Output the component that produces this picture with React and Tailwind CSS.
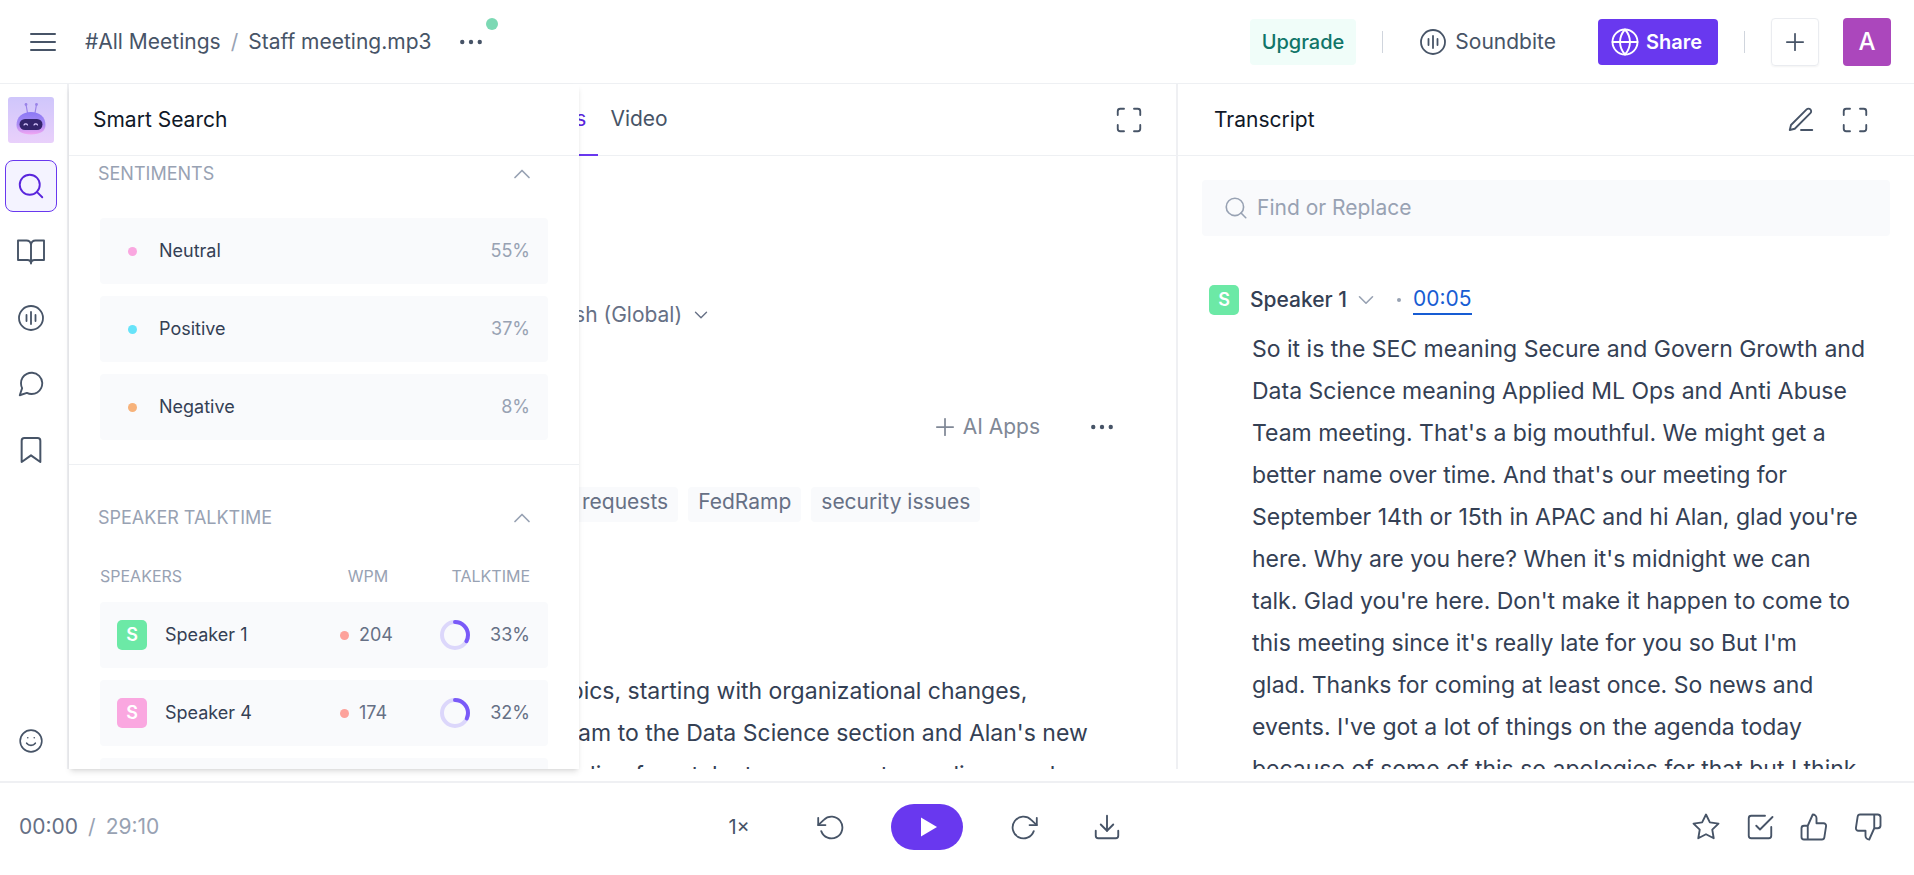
import React, { useState } from 'react';
import {
  FiBookOpen,
  FiBookmark,
  FiCheckSquare,
  FiChevronDown,
  FiChevronUp,
  FiDownload,
  FiEdit3,
  FiGlobe,
  FiMaximize,
  FiMenu,
  FiMessageCircle,
  FiMoreHorizontal,
  FiPlus,
  FiRotateCcw,
  FiRotateCw,
  FiSearch,
  FiSmile,
  FiStar,
  FiThumbsDown,
  FiThumbsUp,
} from 'react-icons/fi';

const sentiments = [
  { label: 'Neutral', value: '55%', dot: 'bg-[#faa7e0]' },
  { label: 'Positive', value: '37%', dot: 'bg-[#67e3f9]' },
  { label: 'Negative', value: '8%', dot: 'bg-[#f7b27a]' },
];

const speakers = [
  { name: 'Speaker 1', wpm: 204, talktime: 33, badge: 'bg-[#6ce9a6]' },
  { name: 'Speaker 4', wpm: 174, talktime: 32, badge: 'bg-[#faa7e0]' },
  { name: 'Speaker 2', wpm: 168, talktime: 18, badge: 'bg-[#67e3f9]' },
];

const tags = ['headcount planning', 'compliance requests', 'FedRamp', 'security issues'];

const summary = [
  'The meeting covered various topics, starting with organizational changes,',
  "including the move of the Ops team to the Data Science section and Alan's new",
  'role as a manager. Additional funding for a talent assessment was discussed',
];

const transcript = [
  'So it is the SEC meaning Secure and Govern Growth and',
  'Data Science meaning Applied ML Ops and Anti Abuse',
  "Team meeting. That's a big mouthful. We might get a",
  "better name over time. And that's our meeting for",
  "September 14th or 15th in APAC and hi Alan, glad you're",
  "here. Why are you here? When it's midnight we can",
  "talk. Glad you're here. Don't make it happen to come to",
  "this meeting since it's really late for you so But I'm",
  'glad. Thanks for coming at least once. So news and',
  "events. I've got a lot of things on the agenda today",
  'because of some of this so apologies for that but I think',
];

const SoundbiteIcon = () => (
  <svg width="28" height="28" viewBox="0 0 28 28" fill="none" stroke="currentColor" strokeWidth="1.8" strokeLinecap="round">
    <circle cx="14" cy="14" r="12" />
    <path d="M9.5 11v6M14 8v12M18.5 11v6" />
  </svg>
);

const RobotLogo = () => (
  <svg width="46" height="46" viewBox="0 0 46 46">
    <defs>
      <linearGradient id="tile" x1="0" y1="0" x2="0" y2="1">
        <stop offset="0" stopColor="#cfc6fb" />
        <stop offset="1" stopColor="#e9d0fb" />
      </linearGradient>
      <linearGradient id="head" x1="0" y1="0" x2="0" y2="1">
        <stop offset="0" stopColor="#8b78f5" />
        <stop offset="0.55" stopColor="#a98bf3" />
        <stop offset="1" stopColor="#f2a6f3" />
      </linearGradient>
    </defs>
    <rect width="46" height="46" rx="3" fill="url(#tile)" />
    <path d="M18 7.5 19.5 16M28.5 7.5 27 16" stroke="#9a83e8" strokeWidth="1.2" strokeLinecap="round" />
    <circle cx="18" cy="7.5" r="1.4" fill="#9a83e8" />
    <circle cx="28.5" cy="7.5" r="1.4" fill="#9a83e8" />
    <path d="M8.5 28c0-8 6-13 14.500-13s14.500 5 14.500 13c0 6-5 9.500-14.500 9.500S8.500 34 8.500 28z" fill="url(#head)" />
    <rect x="11.5" y="22" width="23" height="11" rx="5.5" fill="#33246b" />
    <path
      d="M16 28c.6-1.4 2.9-1.4 3.500 0M26 28c.6-1.4 2.9-1.4 3.500 0"
      fill="none"
      stroke="#d9c9ff"
      strokeWidth="1.2"
      strokeLinecap="round"
    />
  </svg>
);

const BookIcon = () => (
  <svg width="30" height="28" viewBox="0 0 30 28" fill="none" stroke="currentColor" strokeWidth="1.9" strokeLinecap="round" strokeLinejoin="round">
    <path d="M15 6.500C14.600 4 12.800 2.500 10.500 2.500H2V22h9.500c2.200 0 3.500 1 3.500 3.500 0-2.500 1.300-3.500 3.500-3.500H28V2.500h-8.500C17.200 2.500 15.400 4 15 6.500v19" />
  </svg>
);

const TalktimeRing = ({ percent }) => (
  <svg width="30" height="30" viewBox="0 0 30 30" fill="none" strokeWidth="4">
    <circle cx="15" cy="15" r="13" stroke="#dcd7fb" />
    <circle
      cx="15"
      cy="15"
      r="13"
      stroke="#7a5af8"
      strokeLinecap="round"
      pathLength="100"
      strokeDasharray={`${percent} 100`}
      transform="rotate(-90 15 15)"
    />
  </svg>
);

const Badge = ({ color }) => (
  <span className={`flex size-[30px] shrink-0 items-center justify-center rounded-[5px] text-lg font-semibold text-white ${color}`}>
    S
  </span>
);

const railItems = [
  { label: 'Notebook', icon: <BookIcon /> },
  { label: 'Soundbites', icon: <SoundbiteIcon /> },
  { label: 'Comments', icon: <FiMessageCircle size={30} strokeWidth={1.5} /> },
  { label: 'Bookmarks', icon: <FiBookmark size={32} strokeWidth={1.5} /> },
];

const Header = () => (
  <header className="flex h-[84px] shrink-0 items-center justify-between border-b border-[#eef0f3] pl-[27px] pr-[23px]">
    <div className="flex items-center">
      <button aria-label="Menu">
        <FiMenu size={32} strokeWidth={1.5} />
      </button>
      <nav className="ml-[26px] flex items-center gap-2.5">
        <a href="#meetings">#All Meetings</a>
        <span className="text-[#98a2b3]">/</span>
        <a href="#meeting">Staff meeting.mp3</a>
      </nav>
      <button aria-label="More" className="relative ml-6">
        <FiMoreHorizontal size={30} strokeWidth={1.5} fill="currentColor" />
        <span className="absolute -right-3 -top-[9px] size-3 rounded-full bg-[#7cd9b4]" />
      </button>
    </div>

    <div className="flex items-center gap-[26px]">
      <button className="h-[46px] rounded bg-[#f0fdf9] px-3 text-xl font-medium text-[#107569]">Upgrade</button>
      <span className="h-[22px] w-px bg-[#d0d5dd]" />
      <button className="flex h-[46px] items-center gap-2 pl-2.5 pr-4">
        <SoundbiteIcon />
        Soundbite
      </button>
      <button className="flex h-[46px] items-center gap-1.5 rounded bg-[#6938ef] pl-3 pr-4 text-xl font-semibold text-white">
        <FiGlobe size={30} strokeWidth={1.5} />
        Share
      </button>
      <span className="h-[22px] w-px bg-[#d0d5dd]" />
      <div className="flex items-center gap-6">
        <button aria-label="Add" className="flex size-12 items-center justify-center rounded border border-[#eaecf0] shadow-xs">
          <FiPlus size={28} strokeWidth={1.5} />
        </button>
        <button aria-label="Account" className="size-12 rounded bg-[#ab47bc] text-2xl font-medium text-white">
          A
        </button>
      </div>
    </div>
  </header>
);

const Rail = () => (
  <aside className="flex w-[69px] shrink-0 flex-col gap-3.5 border-r-2 border-[#eff0f3] pb-0.5 pl-[5px] pt-2.5">
    <button aria-label="Assistant" className="flex size-[52px] items-center justify-center">
      <RobotLogo />
    </button>
    <button
      aria-label="Smart Search"
      className="flex size-[52px] items-center justify-center rounded-lg border border-[#6938ef] bg-[#f4f3ff] text-[#5925dc]"
    >
      <FiSearch size={30} strokeWidth={1.5} />
    </button>
    {railItems.map((item) => (
      <button key={item.label} aria-label={item.label} className="flex size-[52px] items-center justify-center">
        {item.icon}
      </button>
    ))}
    <button aria-label="Feedback" className="mt-auto flex size-[52px] items-center justify-center">
      <FiSmile size={26} strokeWidth={1.5} />
    </button>
  </aside>
);

const SectionTitle = ({ children, open, onClick }) => (
  <button onClick={onClick} className="flex h-9 w-full items-center justify-between pr-3.5 text-lg text-[#98a2b3]">
    {children}
    {open ? <FiChevronUp size={28} strokeWidth={1.5} /> : <FiChevronDown size={28} strokeWidth={1.5} />}
  </button>
);

const SmartSearch = () => {
  const [showSentiments, setShowSentiments] = useState(true);
  const [showTalktime, setShowTalktime] = useState(true);

  return (
    <section className="absolute inset-y-0 left-0 z-10 w-[510px] overflow-hidden bg-white shadow-md">
      <h2 className="flex h-[72px] items-center border-b border-[#eef0f3] px-6 text-[#101828]">Smart Search</h2>

      <div className="border-b border-[#eef0f3] px-[29px] pb-6">
        <SectionTitle open={showSentiments} onClick={() => setShowSentiments(!showSentiments)}>
          SENTIMENTS
        </SectionTitle>
        {showSentiments && (
          <ul className="mx-0.5 mt-[26px] flex flex-col gap-3">
            {sentiments.map((s) => (
              <li key={s.label} className="flex h-[66px] items-center rounded bg-[#f9fafc] pl-7 pr-[18px] text-lg">
                <span className={`size-[9px] rounded-full ${s.dot}`} />
                <span className="ml-[22px] text-[#344054]">{s.label}</span>
                <span className="ml-auto text-[#98a2b3]">{s.value}</span>
              </li>
            ))}
          </ul>
        )}
      </div>

      <div className="px-[29px] pt-[35px]">
        <SectionTitle open={showTalktime} onClick={() => setShowTalktime(!showTalktime)}>
          SPEAKER TALKTIME
        </SectionTitle>
        {showTalktime && (
          <table className="mt-2.5 w-full border-separate border-spacing-x-0 border-spacing-y-3 px-0.5 text-lg">
            <thead>
              <tr className="h-8 text-base text-[#98a2b3]">
                <th className="pt-1 text-left font-normal">SPEAKERS</th>
                <th className="w-20 pt-1 font-normal">WPM</th>
                <th className="w-[140px] pr-[18px] pt-1 text-right font-normal">TALKTIME</th>
              </tr>
            </thead>
            <tbody>
              {speakers.map((s) => (
                <tr key={s.name} className="h-[66px] bg-[#f9fafc] text-[#667085]">
                  <td className="rounded-l pl-[17px]">
                    <div className="flex items-center gap-[18px] text-[#344054]">
                      <Badge color={s.badge} />
                      {s.name}
                    </div>
                  </td>
                  <td className="pl-3">
                    <div className="flex items-center gap-2.5">
                      <span className="size-[9px] rounded-full bg-[#fda29b]" />
                      {s.wpm}
                    </div>
                  </td>
                  <td className="rounded-r pr-[18px]">
                    <div className="flex items-center justify-end gap-5">
                      <TalktimeRing percent={s.talktime} />
                      {s.talktime}%
                    </div>
                  </td>
                </tr>
              ))}
            </tbody>
          </table>
        )}
      </div>
    </section>
  );
};

const Notes = () => (
  <main className="flex min-w-0 flex-1 flex-col overflow-hidden">
    <div className="flex h-[72px] shrink-0 items-center justify-between border-b border-[#eef0f3] pl-[447px] pr-8">
      <nav className="flex h-[72px]">
        <a href="#notes" className="flex items-center border-b-2 border-[#6938ef] px-3 text-[#5925dc]">Notes</a>
        <a href="#video" className="flex items-center border-b-2 border-transparent px-3">Video</a>
      </nav>
      <button aria-label="Expand notes">
        <FiMaximize size={30} strokeWidth={1.5} />
      </button>
    </div>

    <div className="whitespace-nowrap pl-[156px] pr-[59px] pt-[141px] text-[#667085]">
      <button className="ml-[301px] flex h-9 items-center gap-2">
        English (Global)
        <FiChevronDown size={22} strokeWidth={1.5} />
      </button>

      <div className="mt-[70px] flex h-12 items-center justify-end gap-[47px]">
        <button className="flex items-center gap-1 text-[#808896]">
          <FiPlus size={28} strokeWidth={1.5} />
          AI Apps
        </button>
        <button aria-label="More options" className="text-[#475467]">
          <FiMoreHorizontal size={30} strokeWidth={1.5} fill="currentColor" />
        </button>
      </div>

      <ul className="mt-9 flex gap-2.5">
        {tags.map((tag) => (
          <li key={tag} className="flex h-[35px] items-center rounded bg-[#f9fafc] px-2.5 pb-1.5">
            {tag}
          </li>
        ))}
      </ul>

      <p className="mt-[148px] text-[23px] leading-[42px] text-[#344054]">
        {summary.map((line) => (
          <span key={line} className="block">{line}</span>
        ))}
      </p>
    </div>
  </main>
);

const Transcript = () => (
  <section className="flex w-2/5 shrink-0 flex-col overflow-hidden border-l-2 border-[#eff0f3]">
    <div className="flex h-[72px] shrink-0 items-center justify-between border-b border-[#eef0f3] pl-9 pr-11">
      <h2 className="text-[#101828]">Transcript</h2>
      <div className="flex gap-6">
        <button aria-label="Edit transcript">
          <FiEdit3 size={30} strokeWidth={1.5} />
        </button>
        <button aria-label="Expand transcript">
          <FiMaximize size={30} strokeWidth={1.5} />
        </button>
      </div>
    </div>

    <div className="px-6 pt-6">
      <label className="flex h-14 items-center gap-2 rounded bg-[#f9fafc] pl-[21px] text-[#98a2b3]">
        <FiSearch size={26} strokeWidth={1.5} />
        <input type="text" placeholder="Find or Replace" className="min-w-0 flex-1 outline-none placeholder:text-[#98a2b3]" />
      </label>

      <div className="mt-[49px] flex h-[30px] items-center pl-[7px]">
        <Badge color="bg-[#6ce9a6]" />
        <button className="ml-[11px] flex items-center gap-1.5 font-medium text-[#344054]">
          Speaker 1
          <FiChevronDown size={26} strokeWidth={1.5} className="text-[#98a2b3]" />
        </button>
        <span className="ml-[18px] size-1 rounded-full bg-[#98a2b3]" />
        <a href="#t5" className="ml-3 border-b-2 border-[#175cd3] leading-7 text-[#175cd3]">00:05</a>
      </div>

      <p className="mt-[13px] whitespace-nowrap pl-[50px] text-[23px] leading-[42px] text-[#344054]">
        {transcript.map((line) => (
          <span key={line} className="block">{line}</span>
        ))}
      </p>
    </div>
  </section>
);

const Player = () => (
  <footer className="mt-3 flex h-[94px] shrink-0 items-center justify-between border-t-2 border-[#eff0f3] px-[19px] pb-1">
    <div className="flex gap-2.5 text-[#98a2b3]">
      <span className="text-[#667085]">00:00</span>
      <span>/</span>
      <span>29:10</span>
    </div>

    <div className="flex items-center gap-9">
      <button className="h-12 w-16 text-xl">1×</button>
      <button aria-label="Rewind" className="flex size-12 items-center justify-center">
        <FiRotateCcw size={29} strokeWidth={1.5} />
      </button>
      <button aria-label="Play" className="flex h-[46px] w-[72px] items-center justify-center rounded-full bg-[#6938ef]">
        <svg width="16" height="20" viewBox="0 0 16 20" className="ml-1" fill="#fff">
          <path d="M0 .5 16 10 0 19.5z" />
        </svg>
      </button>
      <button aria-label="Forward" className="flex size-12 items-center justify-center">
        <FiRotateCw size={29} strokeWidth={1.5} />
      </button>
      <button aria-label="Download" className="flex size-12 items-center justify-center">
        <FiDownload size={30} strokeWidth={1.5} />
      </button>
    </div>

    <div className="flex">
      <button aria-label="Star" className="flex h-12 w-[54px] items-center justify-center">
        <FiStar size={30} strokeWidth={1.5} />
      </button>
      <button aria-label="Task" className="flex h-12 w-[54px] items-center justify-center">
        <FiCheckSquare size={30} strokeWidth={1.5} />
      </button>
      <button aria-label="Like" className="flex h-12 w-[54px] items-center justify-center">
        <FiThumbsUp size={30} strokeWidth={1.5} />
      </button>
      <button aria-label="Dislike" className="flex h-12 w-[54px] items-center justify-center">
        <FiThumbsDown size={30} strokeWidth={1.5} />
      </button>
    </div>
  </footer>
);

export default function App() {
  return (
    <div className="flex h-screen flex-col bg-white font-[Inter,sans-serif] text-[21px] leading-7 text-[#475467]">
      <Header />
      <div className="flex min-h-0 flex-1">
        <Rail />
        <div className="relative flex min-w-0 flex-1">
          <SmartSearch />
          <Notes />
          <Transcript />
        </div>
      </div>
      <Player />
    </div>
  );
}
